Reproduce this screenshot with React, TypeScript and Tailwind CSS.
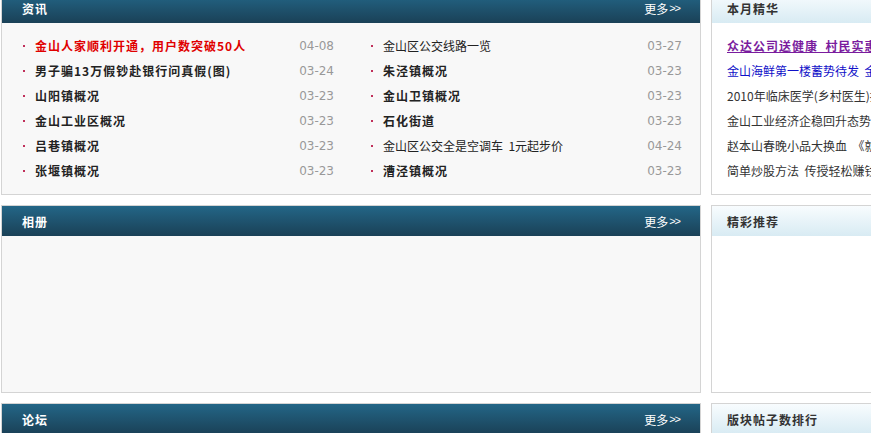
const cjk = 'font-["SimSun","Noto_Sans_CJK_SC",sans-serif]';

type News = { title: string; date: string; bold?: boolean; red?: boolean };

const newsLeft: News[] = [
  { title: '金山人家顺利开通，用户数突破50人', date: '04-08', bold: true, red: true },
  { title: '男子骗13万假钞赴银行问真假(图)', date: '03-24', bold: true },
  { title: '山阳镇概况', date: '03-23', bold: true },
  { title: '金山工业区概况', date: '03-23', bold: true },
  { title: '吕巷镇概况', date: '03-23', bold: true },
  { title: '张堰镇概况', date: '03-23', bold: true },
];

const newsRight: News[] = [
  { title: '金山区公交线路一览', date: '03-27' },
  { title: '朱泾镇概况', date: '03-23', bold: true },
  { title: '金山卫镇概况', date: '03-23', bold: true },
  { title: '石化街道', date: '03-23', bold: true },
  { title: '金山区公交全是空调车  1元起步价', date: '04-24' },
  { title: '漕泾镇概况', date: '03-23', bold: true },
];

const featured = [
  { text: '众达公司送健康  村民实惠多多', cls: 'font-bold underline text-[#7a1c9e] tracking-[1px]' },
  { text: '金山海鲜第一楼蓄势待发  金山人家', cls: 'text-[#1010c8]' },
  { text: '2010年临床医学(乡村医生)招生', cls: 'text-[#333]' },
  { text: '金山工业经济企稳回升态势明显', cls: 'text-[#333]' },
  { text: '赵本山春晚小品大换血  《就是》', cls: 'text-[#333]' },
  { text: '简单炒股方法  传授轻松赚钱', cls: 'text-[#333]' },
];

function DarkHeader({ title }: { title: string }) {
  return (
    <div className="flex h-[30px] items-center justify-between bg-gradient-to-b from-[#236687] to-[#1a4157] pl-[20px] pr-[20px] pt-[1px]">
      <span className={`${cjk} text-[12px] font-bold tracking-[1px] text-white`}>{title}</span>
      <span className={`${cjk} flex items-center text-[12px] text-white`}>
        更多
        <span className="ml-[1px] font-['Liberation_Sans',sans-serif] text-[11px] tracking-[-1px]">&gt;&gt;</span>
      </span>
    </div>
  );
}

function LightHeader({ title }: { title: string }) {
  return (
    <div className="flex h-[30px] items-center bg-gradient-to-b from-[#f8fcfe] to-[#d8ebf3] pl-[15px] pt-[1px]">
      <span className={`${cjk} text-[12px] font-bold tracking-[1px] text-[#333]`}>{title}</span>
    </div>
  );
}

function NewsRow({ item }: { item: News }) {
  return (
    <div className="flex h-[25px] items-center">
      <span className="ml-[2px] h-[2px] w-[2px] bg-[#c0305a]" />
      <span
        className={`${cjk} ml-[10px] whitespace-pre text-[12px] ${
          item.bold ? 'font-bold tracking-[1px]' : ''
        } ${item.red ? 'text-[#e00000]' : 'text-[#222]'}`}
      >
        {item.title}
      </span>
      <span className="ml-auto font-['DejaVu_Sans',sans-serif] text-[12px] text-[#999]">{item.date}</span>
    </div>
  );
}

export default function App() {
  return (
    <div className="h-[433px] w-full overflow-hidden bg-white">
      <div className="-mt-[8px] ml-[1px] flex w-[1000px] gap-[10px]">
        {/* main column */}
        <div className="flex w-[700px] flex-col gap-[10px]">
          <section className="border border-[#d4d4d4]">
            <DarkHeader title="资讯" />
            <div className="grid h-[171px] grid-cols-2 gap-x-[35px] bg-[#f8f8f8] pb-[11px] pl-[19px] pr-[18px] pt-[10px]">
              <div>
                {newsLeft.map((n) => (
                  <NewsRow key={n.title} item={n} />
                ))}
              </div>
              <div>
                {newsRight.map((n) => (
                  <NewsRow key={n.title} item={n} />
                ))}
              </div>
            </div>
          </section>
          <section className="border border-[#d4d4d4]">
            <DarkHeader title="相册" />
            <div className="h-[156px] bg-[#f8f8f8]" />
          </section>
          <section className="border border-[#d4d4d4]">
            <DarkHeader title="论坛" />
            <div className="h-[156px] bg-[#f8f8f8]" />
          </section>
        </div>

        {/* side column */}
        <div className="flex w-[260px] flex-col gap-[10px]">
          <section className="border border-[#d4d4d4]">
            <LightHeader title="本月精华" />
            <div className="h-[171px] bg-white pl-[15px] pt-[10px]">
              {featured.map((f) => (
                <div key={f.text} className={`${cjk} flex h-[25px] items-center whitespace-pre text-[12px] ${f.cls}`}>
                  {f.text}
                </div>
              ))}
            </div>
          </section>
          <section className="border border-[#d4d4d4]">
            <LightHeader title="精彩推荐" />
            <div className="h-[156px] bg-white" />
          </section>
          <section className="border border-[#d4d4d4]">
            <LightHeader title="版块帖子数排行" />
            <div className="h-[156px] bg-white" />
          </section>
        </div>
      </div>
    </div>
  );
}
